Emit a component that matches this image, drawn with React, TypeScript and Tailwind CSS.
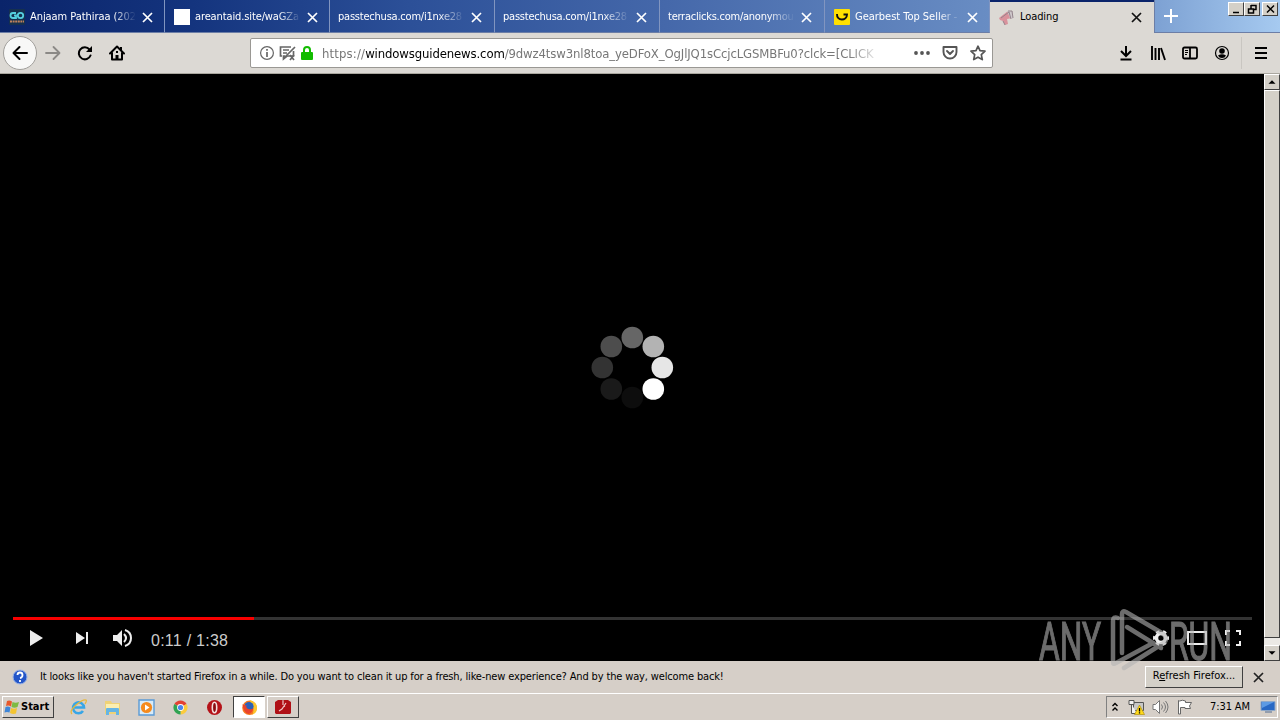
import React from 'react';

const ui = "font-['DejaVu_Sans_Condensed','DejaVu_Sans',sans-serif]";

const tabs = [
  { title: 'Anjaam Pathiraa (202', icon: 'go', text: 'w-[107px] tracking-[-0.06px]' },
  { title: 'areantaid.site/waGZa', icon: 'blank', text: 'w-[107px] tracking-[-0.12px]' },
  { title: 'passtechusa.com/i1nxe28', icon: '', text: 'w-[128px] tracking-[-0.22px]' },
  { title: 'passtechusa.com/i1nxe28', icon: '', text: 'w-[128px] tracking-[-0.22px]' },
  { title: 'terraclicks.com/anonymou', icon: '', text: 'w-[128px] tracking-[-0.24px]' },
  { title: 'Gearbest Top Seller -', icon: 'gearbest', text: 'w-[107px] tracking-[-0.02px]' },
];

const TabIcon = ({ name }: { name: string }) => {
  if (name === 'go') {
    return (
      <svg width="16" height="16" viewBox="0 0 16 16">
        <rect width="16" height="16" rx="1" fill="#15304f" />
        <path d="M7 4H4a2.500 2.500 0 0 0 0 5h3V6.500H5" fill="none" stroke="#55d0e0" strokeWidth="1.800" />
        <circle cx="11.500" cy="6.500" r="2.700" fill="none" stroke="#55d0e0" strokeWidth="1.800" />
        <path d="M1 12.500h14" stroke="#c0825c" strokeWidth="2" strokeDasharray="2 .6" />
      </svg>
    );
  }
  if (name === 'gearbest') {
    return (
      <svg width="16" height="16" viewBox="0 0 16 16">
        <rect width="16" height="16" rx="1" fill="#ffe000" />
        <path d="M3 5c-.5 7.500 10 7 10 .5H9.500" fill="none" stroke="#111" strokeWidth="1.900" />
      </svg>
    );
  }
  return <span className="block h-4 w-4 bg-white" />;
};

const Cross = ({ color }: { color: string }) => (
  <svg width="11" height="11" viewBox="0 0 11 11">
    <path d="M1 1l9 9M10 1l-9 9" stroke={color} strokeWidth="1.700" />
  </svg>
);

const TabBar = () => (
  <div className="flex h-[33px] bg-[linear-gradient(90deg,#0a246a_0%,#14347e_15%,#2c5098_32%,#4568aa_52%,#6488c0_74%,#7ca0d2_90%,#a6caf0_100%)]">
    {tabs.map((tab, i) => (
      <div key={i} className="flex h-[33px] w-[165px] shrink-0 items-center border-r border-b border-r-[#8195c0] border-b-[#6c7ea6] pt-[2px] pl-[8px]">
        {tab.icon && (
          <span className="mr-[5px] ml-px w-4">
            <TabIcon name={tab.icon} />
          </span>
        )}
        <span className={`text-[11px] leading-[16px] whitespace-nowrap text-white [mask-image:linear-gradient(90deg,#000_78%,transparent_99%)] ${tab.text}`}>
          {tab.title}
        </span>
        <span className="ml-[5px]">
          <Cross color="#fff" />
        </span>
      </div>
    ))}
    <div className="flex h-[33px] w-[164px] items-center border-t-2 border-[#0a246a] bg-[#dcd9d4] pl-[9px]">
      <svg width="16" height="16" viewBox="0 0 16 16">
        <path d="M0 8l9-7 4 7-5 1 1 5-3 1-2-4-3-1z" fill="#d9929c" />
        <path d="M8 1h6v8l-3-1z" fill="#cfc8cb" />
        <path d="M2 8l8-6 2 7M9 1h4l1 7M4 11l2 4" fill="none" stroke="#94848c" />
      </svg>
      <span className="ml-[5px] w-[107px] text-[11px] tracking-[-0.1px] text-black">Loading</span>
      <span className="ml-[4px]">
        <Cross color="#111" />
      </span>
    </div>
    <div className="flex grow justify-between border-b border-l border-[#6c7ea6]">
      <svg className="mt-[9px] ml-[9px]" width="14" height="14" viewBox="0 0 14 14">
        <path d="M7 0v14M0 7h14" stroke="#fff" strokeWidth="2" />
      </svg>
      <div className="mt-[2px] mr-[2px] flex h-[14px]">
        <CaptionButton path="M3 9.500h6" />
        <CaptionButton path="M5 2.500h5v4h-2M5 2v4M2.500 6h5v4h-5z" />
        <span className="w-[2px]" />
        <CaptionButton path="M3 2.500l7 7M10 2.500l-7 7" />
      </div>
    </div>
  </div>
);

const CaptionButton = ({ path }: { path: string }) => (
  <span className="flex h-[14px] w-4 items-center justify-center border border-t-white border-r-[#404040] border-b-[#404040] border-l-white bg-[#d4d0c8]">
    <svg width="13" height="12" viewBox="0 0 13 12">
      <path d={path} fill="none" stroke="#000" strokeWidth="1.500" />
    </svg>
  </span>
);

const NavBar = () => (
  <div className="flex h-[41px] items-center border-b border-[#aaa79f] bg-[#dcd9d4]">
    <div className="ml-[3px] flex h-[34px] w-[34px] items-center justify-center rounded-full border border-[#a19f9b] bg-[#f8f8f7]">
      <svg width="16" height="16" viewBox="0 0 16 16">
        <path d="M15 8H2M7.500 2L1.500 8l6 6" fill="none" stroke="#000" strokeWidth="2" strokeLinecap="round" strokeLinejoin="round" />
      </svg>
    </div>
    <svg className="ml-2" width="16" height="16" viewBox="0 0 16 16">
      <path d="M1 8h13M8.500 2l6 6-6 6" fill="none" stroke="#8b8986" strokeWidth="1.800" strokeLinecap="round" strokeLinejoin="round" />
    </svg>
    <svg className="ml-4" width="16" height="16" viewBox="0 0 16 16">
      <path d="M12.500 4.500A6 6 0 1 0 13.500 10.500" fill="none" stroke="#000" strokeWidth="2" strokeLinecap="round" />
      <path d="M15 1v6H9z" fill="#000" />
    </svg>
    <svg className="ml-4" width="16" height="16" viewBox="0 0 16 16">
      <path d="M1 8.500L8 1.500l7 7M3 8v6.500h10V8" fill="none" stroke="#000" strokeWidth="2" strokeLinecap="round" strokeLinejoin="round" />
      <path d="M6.500 14v-4h3v4zM11 2h2v4h-2zM7 6h2v2H7z" fill="#000" />
    </svg>
    <div className="ml-[125px] flex h-[30px] w-[743px] items-center rounded-[2px] border border-[#9a9894] bg-white pl-2">
      <svg width="16" height="16" viewBox="0 0 16 16">
        <circle cx="8" cy="8" r="6.400" fill="none" stroke="#666" strokeWidth="1.200" />
        <path d="M8 7v5M8 4v1.700" stroke="#666" strokeWidth="1.700" />
      </svg>
      <svg className="ml-1" width="17" height="16" viewBox="0 0 17 16">
        <path d="M6 11H4.500v3L8 11h6.500V6M12 2H1.500v9H3M4 5h6M4 8h4" fill="none" stroke="#666" strokeWidth="1.700" />
        <path d="M5 13L16 2M11 10l4 5M15 10l-4 5" stroke="#666" strokeWidth="1.700" />
      </svg>
      <svg className="ml-[4px]" width="14" height="16" viewBox="0 0 14 16">
        <path d="M4 8V5a3 3 0 0 1 6 0v3" fill="none" stroke="#12bc00" strokeWidth="2" />
        <rect x="1" y="7" width="12" height="8" rx="1" fill="#12bc00" />
      </svg>
      <span className="mt-px ml-2 w-[554px] text-[13px] leading-[18px] tracking-[-0.13px] whitespace-nowrap text-[#777] [mask-image:linear-gradient(90deg,#000_95%,transparent_101%)]">
        <span className="tracking-[0.15px]">https://</span>
        <span className="text-black">windowsguidenews.com</span>
        <span>/9dwz4tsw3nl8toa_yeDFoX_OgJlJQ1sCcjcLGSMBFu0?clck=[CLICK</span>
      </span>
      <svg className="ml-[37px]" width="18" height="16" viewBox="0 0 18 16">
        <g fill="#555">
          <circle cx="3" cy="8" r="1.900" />
          <circle cx="9" cy="8" r="1.900" />
          <circle cx="15" cy="8" r="1.900" />
        </g>
      </svg>
      <svg className="ml-[11px]" width="16" height="16" viewBox="0 0 16 16">
        <path d="M1.500 2h13v5a6.500 6.500 0 0 1-13 0zM5 6l3 3 3-3" fill="none" stroke="#555" strokeWidth="1.900" strokeLinecap="round" strokeLinejoin="round" />
      </svg>
      <svg className="ml-3" width="16" height="16" viewBox="0 0 16 16">
        <path d="M8 1.200l2 4.500 5 .5-3.700 3.400 1 5L8 12.200l-4.300 2.400 1-5L1 6.200l5-.5z" fill="none" stroke="#555" strokeWidth="1.700" strokeLinejoin="round" />
      </svg>
    </div>
    <div className="ml-[125px] flex items-center gap-4">
      <svg width="16" height="16" viewBox="0 0 16 16">
        <path d="M8 1v10M3 6l5 5 5-5M2.500 14.500h11" fill="none" stroke="#000" strokeWidth="2" />
      </svg>
      <svg width="16" height="16" viewBox="0 0 16 16">
        <path d="M2 1v14M5.500 3v12M9 3v12M11 3l4 12" fill="none" stroke="#000" strokeWidth="1.900" />
      </svg>
      <svg width="16" height="16" viewBox="0 0 16 16">
        <path d="M2.500 2.500h11q1.500 0 1.500 1.500v8q0 1.500-1.500 1.500h-11Q1 13.500 1 12V4q0-1.500 1.500-1.500zM8 3v10" fill="none" stroke="#000" strokeWidth="1.800" />
        <path d="M3 5.500h3M3 7.500h3M3 9.500h2" stroke="#000" />
      </svg>
      <svg width="16" height="16" viewBox="0 0 16 16">
        <circle cx="8" cy="8" r="6.500" fill="none" stroke="#000" strokeWidth="1.200" />
        <circle cx="8" cy="6" r="2.800" />
        <path d="M4 10.500q4-2.500 8 0Q11 13 8 13t-4-2.500z" />
      </svg>
    </div>
    <span className="ml-[11px] h-8 w-px bg-[#c9c6c1]" />
    <svg className="ml-[12px]" width="14" height="14" viewBox="0 0 14 14">
      <path d="M1 2h12M1 7h12M1 12h12" stroke="#000" strokeWidth="2" />
    </svg>
  </div>
);

const dots = [
  { cx: 52, cy: 22.500, fill: '#666' },
  { cx: 73, cy: 31.500, fill: '#b3b3b3' },
  { cx: 82, cy: 52.500, fill: '#e6e6e6' },
  { cx: 73, cy: 74, fill: '#fff' },
  { cx: 52, cy: 82.500, fill: '#0d0d0d' },
  { cx: 31, cy: 74, fill: '#1a1a1a' },
  { cx: 22, cy: 52.500, fill: '#333' },
  { cx: 31, cy: 31.500, fill: '#4d4d4d' },
];

const Player = () => (
  <div className="flex h-full w-[1264px] flex-col bg-black">
    <div className="flex h-[543px] items-center justify-center pt-[42px]">
      <svg width="104" height="104" viewBox="0 0 104 104">
        {dots.map((d, i) => (
          <circle key={i} cx={d.cx + 0.3} cy={d.cy} r="10.800" fill={d.fill} />
        ))}
      </svg>
    </div>
    <div className="mr-3 ml-[13px] flex h-[3px] bg-[#333]">
      <span className="w-[241px] bg-[#f80000]" />
    </div>
    <div className="flex h-[36px] items-center pr-[23px] pl-[29px]">
      <svg width="14" height="16" viewBox="0 0 14 16" fill="#eee">
        <path d="M1 0l13 8-13 8z" />
      </svg>
      <svg className="ml-8" width="14" height="14" viewBox="0 0 14 14" fill="#eee">
        <path d="M1 1l9 6-9 6zM11 1h2v12h-2z" />
      </svg>
      <svg className="ml-6" width="19" height="18" viewBox="0 0 19 18">
        <path d="M0 6h4l5-5v16l-5-5H0z" fill="#eee" />
        <path d="M11 5q4 4 0 8M12 1q6 2 6 8t-6 8" fill="none" stroke="#eee" strokeWidth="2" />
      </svg>
      <span className="mt-[5px] ml-[19px] grow font-['Liberation_Sans',Arial,sans-serif] text-[16px] tracking-[0.25px] text-[#ccc]">0:11 / 1:38</span>
      <svg width="16" height="16" viewBox="0 0 16 16">
        <circle cx="8" cy="8" r="4.500" fill="none" stroke="#eee" strokeWidth="3.500" />
        <circle cx="8" cy="8" r="6.800" fill="none" stroke="#eee" strokeWidth="2.400" strokeDasharray="3.560" strokeDashoffset="1.780" />
      </svg>
      <svg className="ml-[18px]" width="20" height="14" viewBox="0 0 20 14">
        <path d="M1 1h18v12H1z" fill="none" stroke="#eee" strokeWidth="2" />
      </svg>
      <svg className="ml-[18px]" width="16" height="16" viewBox="0 0 16 16">
        <path d="M1 5V1h4M11 1h4v4M15 11v4h-4M5 15H1v-4" fill="none" stroke="#eee" strokeWidth="2" />
      </svg>
    </div>
  </div>
);

const ScrollBar = () => (
  <div className="flex w-4 flex-col bg-[#ebe9e5]">
    <ScrollArrow path="M4 10l4-4 4 4z" />
    <div className="h-[548px] border border-t-white border-r-[#404040] border-b-[#404040] border-l-white bg-[#d4d0c8]" />
    <div className="grow" />
    <ScrollArrow path="M4 6l4 4 4-4z" />
  </div>
);

const ScrollArrow = ({ path }: { path: string }) => (
  <div className="h-4 w-4 shrink-0 border border-t-white border-r-[#404040] border-b-[#404040] border-l-white bg-[#d4d0c8]">
    <svg width="14" height="14" viewBox="0 0 16 16">
      <path d={path} />
    </svg>
  </div>
);

const Watermark = () => (
  <div className="pointer-events-none absolute top-[608px] left-[1036px] opacity-60">
    <svg width="200" height="68" viewBox="0 0 200 68" fill="#b4b4b4" className="font-['Roboto',sans-serif] text-[53px]">
      <text x="3" y="51.500" textLength="62" lengthAdjust="spacingAndGlyphs" stroke="#b4b4b4" strokeWidth="1.200">ANY</text>
      <text x="133" y="51.500" textLength="63" lengthAdjust="spacingAndGlyphs" stroke="#b4b4b4" strokeWidth="1.200">RUN</text>
      <g fill="none" stroke="#b4b4b4" strokeWidth="4.500" strokeLinejoin="round" strokeLinecap="round">
        <path d="M82 10q-5-2-5 3v41q0 3 3 1l37-20" />
        <path d="M86 45V6q0-4 4-2l36 21q4 3 4 6t-4 5L88 60" />
        <path d="M91 19l34 21" />
      </g>
    </svg>
  </div>
);

const Notification = () => (
  <div className="flex h-[32px] items-center bg-[#d6cfc8] pl-3 text-[11px]">
    <svg width="16" height="16" viewBox="0 0 16 16">
      <circle cx="8" cy="8" r="7" fill="#2456c8" stroke="#9ab4e8" />
      <path d="M5.500 6q0-2.500 2.500-2.500T10.500 6 8 9M8 11v2" fill="none" stroke="#fff" strokeWidth="1.800" />
    </svg>
    <span className="mt-px ml-[12px] w-[1105px] tracking-[-0.148px] whitespace-nowrap">
      It looks like you haven't started Firefox in a while. Do you want to clean it up for a fresh, like-new experience? And by the way, welcome back!
    </span>
    <button className="mb-px h-[22px] w-[98px] border border-t-white border-r-[#404040] border-b-[#404040] border-l-white bg-[#d4d0c8] text-center">
      R<span className="underline">e</span>fresh Firefox...
    </button>
    <span className="ml-[10px]">
      <Cross color="#222" />
    </span>
  </div>
);

const quickLaunch = [
  // internet explorer
  <svg key="ie" width="17" height="17" viewBox="0 0 17 17" fill="none">
    <path d="M13 12a5.500 5.500 0 1 1 1-3.500H4.500" stroke="#38a6e6" strokeWidth="2.600" />
    <path d="M2 15Q-1 12 6 6T16 1q1 1-1 4" stroke="#e8b83a" strokeWidth="1.300" />
  </svg>,
  // explorer
  <svg key="folder" width="17" height="17" viewBox="0 0 17 17">
    <path d="M1 2h6l1 2h8v11H1z" fill="#efd277" />
    <path d="M2 5h13v5H2z" fill="#fbeeb0" />
    <path d="M2 16v-6q0-1 1-1h11q1 0 1 1v6h-3v-3H5v3z" fill="#66b5e4" />
  </svg>,
  // media player
  <svg key="wmp" width="17" height="17" viewBox="0 0 17 17">
    <path d="M1 1h15v15H1z" fill="#d8ebf8" stroke="#5b9bd5" strokeWidth="1.400" />
    <circle cx="8.500" cy="8.500" r="5.600" fill="#f58a1d" />
    <path d="M7 5.500l4.500 3-4.500 3z" fill="#fff" />
  </svg>,
  // chrome
  <svg key="chrome" width="17" height="17" viewBox="0 0 17 17">
    <path d="M8.500 8.500L2.400 5a7 7 0 0 1 12.200 0z" fill="#e34133" />
    <path d="M8.500 8.500L14.600 5a7 7 0 0 1-6.100 10.500z" fill="#fbcb3c" />
    <path d="M8.500 8.500v7A7 7 0 0 1 2.400 5z" fill="#31a352" />
    <circle cx="8.500" cy="8.500" r="3.400" fill="#fff" />
    <circle cx="8.500" cy="8.500" r="2.600" fill="#4b86ee" />
  </svg>,
  // opera
  <svg key="opera" width="17" height="17" viewBox="0 0 17 17">
    <circle cx="8.500" cy="8.500" r="7.500" fill="#b51218" />
    <ellipse cx="8.500" cy="8.500" rx="2.200" ry="5.200" fill="#8a0a0e" stroke="#f3dede" strokeWidth="1.600" />
  </svg>,
];

const TaskBar = () => (
  <div className="flex h-[27px] items-center border-t border-white bg-[#d6cfc8] text-[11px]">
    <div className="ml-[2px] flex h-[22px] w-[52px] items-center border border-t-white border-r-[#404040] border-b-[#404040] border-l-white pl-px font-bold">
      <svg width="16" height="16" viewBox="0 0 16 16">
        <path d="M3 2q2.500-1 5 .5L7 7.500Q4.500 6 2 7z" fill="#e8582a" />
        <path d="M8.500 3q3 1.500 6.500 0l-1.500 5q-3 1.300-6 0z" fill="#7dbb42" />
        <path d="M1.500 8q2.500-1 5 .5l-1 5Q3 12.500.5 13.500z" fill="#3f86d8" />
        <path d="M7 9q3 1.500 6 0l-1 5.500q-3 1-6-.5z" fill="#f4c430" />
      </svg>
      <span className="mt-px ml-px">Start</span>
    </div>
    <div className="ml-[16px] flex items-center gap-[17px]">{quickLaunch}</div>
    <div className="ml-[10px] flex h-[22px] w-8 items-center justify-center border border-t-[#404040] border-r-white border-b-white border-l-[#404040] bg-white">
      <svg width="17" height="17" viewBox="0 0 17 17">
        <circle cx="8.500" cy="8.800" r="7.300" fill="#f6781d" />
        <path d="M9 1q7 2 7 8 0 5-5 7 3-5 0-9-2-2-2-6z" fill="#fcc62e" />
        <circle cx="8" cy="7.500" r="4.600" fill="#2b60b8" />
        <path d="M1.500 5q2 2 4 1-1 3 2 4t5-1q-1 5-5 6-5-1-6-10z" fill="#e9432c" />
      </svg>
    </div>
    <div className="ml-[2px] flex h-[22px] w-8 items-center justify-center border border-t-white border-r-[#404040] border-b-[#404040] border-l-white">
      <svg width="16" height="16" viewBox="0 0 16 16">
        <path d="M0 3l3-2h4l1 1 1-1h4l3 2v11l-1 1H1l-1-1z" fill="#b01016" />
        <path d="M8 2v4M4 12l3-2 4-6M8 8l2-1" fill="none" stroke="#f0caca" strokeWidth="1.200" />
      </svg>
    </div>
    <div className="mr-[2px] ml-auto flex h-[22px] w-[172px] items-center border border-t-[#808080] border-r-white border-b-white border-l-[#808080] pl-[4px]">
      <svg width="8" height="10" viewBox="0 0 8 10">
        <path d="M1.500 4L4 1.500 6.500 4M1.500 8.500L4 6l2.500 2.500" fill="none" stroke="#000" strokeWidth="1.400" />
      </svg>
      <svg className="ml-[9px]" width="17" height="16" viewBox="0 0 17 16">
        <path d="M5.500 3.500h10v8h-10z" fill="#c8c8c8" stroke="#555" />
        <path d="M1 1.500h5v4H1zM3.500 5v9.500H9" fill="#f2f2f2" stroke="#555" />
        <path d="M11.500 6l5 9.500h-10z" fill="#ffd91a" stroke="#a88600" strokeWidth=".6" />
        <path d="M11.500 9v3.500M11.500 13.300v1.200" stroke="#000" strokeWidth="1.300" />
      </svg>
      <svg className="ml-[7px]" width="17" height="16" viewBox="0 0 17 16">
        <path d="M1 5.500h2.500L7.500 1.500v13l-4-4H1z" fill="#fff" stroke="#777" />
        <path d="M9.500 5.500q2 2.500 0 5M11.500 3.500q4 4.500 0 9M13.500 2q5 6 0 12" fill="none" stroke="#777" />
      </svg>
      <svg className="ml-[8px]" width="16" height="16" viewBox="0 0 16 16">
        <path d="M2.500 2q3-1.500 6 0v1.500h6L12.500 7l1 2.500H8V8.500H3.500V15h-2V1.500z" fill="#fff" stroke="#666" />
      </svg>
      <span className="mt-px ml-[17px] w-[50px] tracking-[-0.1px] whitespace-nowrap">7:31 AM</span>
      <svg width="16" height="16" viewBox="0 0 16 16">
        <path d="M1 2.500h14v9H1z" fill="#2868c4" stroke="#8fa8c8" />
        <path d="M2 3h12L2 9z" fill="#5c9ae4" />
        <path d="M5 13h7" stroke="#7c8ca4" strokeWidth="1.500" />
      </svg>
    </div>
  </div>
);

const App = () => (
  <div className={`relative flex h-[720px] w-[1280px] flex-col overflow-hidden text-black ${ui}`}>
    <TabBar />
    <NavBar />
    <div className="flex h-[587px]">
      <Player />
      <ScrollBar />
    </div>
    <Notification />
    <TaskBar />
    <Watermark />
  </div>
);

export default App;
